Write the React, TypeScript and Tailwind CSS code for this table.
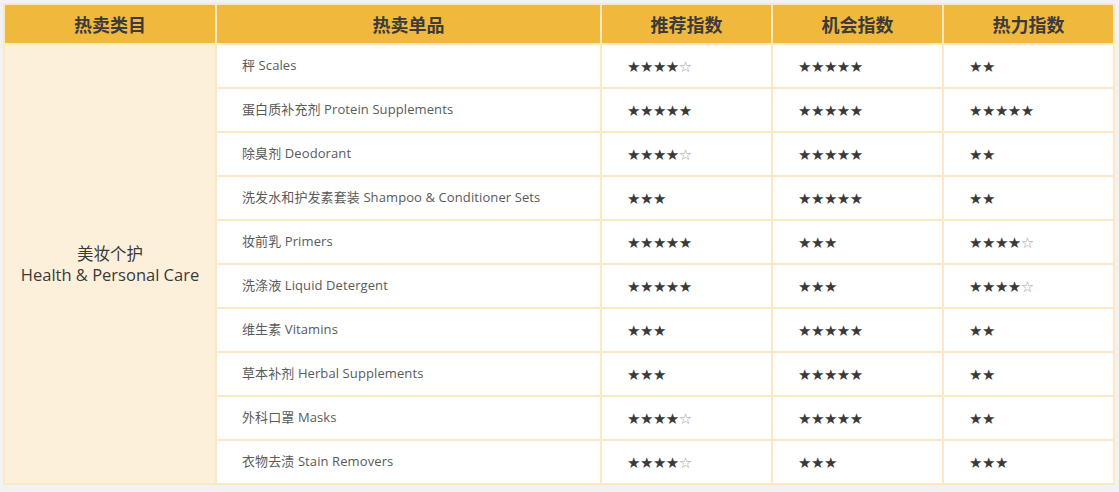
import React from "react";

type Row = { name: string; rec: number; opp: number; heat: number };

const rows: Row[] = [
  { name: "秤 Scales", rec: 4, opp: 5, heat: 2 },
  { name: "蛋白质补充剂 Protein Supplements", rec: 5, opp: 5, heat: 5 },
  { name: "除臭剂 Deodorant", rec: 4, opp: 5, heat: 2 },
  { name: "洗发水和护发素套装 Shampoo & Conditioner Sets", rec: 3, opp: 5, heat: 2 },
  { name: "妆前乳 Primers", rec: 5, opp: 3, heat: 4 },
  { name: "洗涤液 Liquid Detergent", rec: 5, opp: 3, heat: 4 },
  { name: "维生素 Vitamins", rec: 3, opp: 5, heat: 2 },
  { name: "草本补剂 Herbal Supplements", rec: 3, opp: 5, heat: 2 },
  { name: "外科口罩 Masks", rec: 4, opp: 5, heat: 2 },
  { name: "衣物去渍 Stain Removers", rec: 4, opp: 3, heat: 3 },
];

// 4 means four full stars plus one hollow one; 2, 3 and 5 are shown bare
const Stars: React.FC<{ n: number }> = ({ n }) => (
  <span className="text-[15px] tracking-[-0.5px] text-[#3a3a3a]" style={{ fontFamily: '"DejaVu Sans", sans-serif' }}>
    {"★".repeat(n)}
    {n === 4 && <span className="text-[#9a9a9a]">☆</span>}
  </span>
);

const th = "border-2 border-[#fce8c2] h-[40px] pt-[2px] text-center text-[18px] font-bold text-[#3b3b3b]";
const td = "border-2 border-[#fce8c2] h-[44px] pl-[25px] bg-white";

export default function App() {
  return (
    <div
      className="min-h-screen bg-[#f2f2f2] p-[3px]"
      style={{ fontFamily: '"Open Sans", "Noto Sans CJK SC", sans-serif' }}
    >
      <table className="w-[1111px] border-collapse table-fixed">
        <colgroup>
          <col className="w-[212px]" />
          <col className="w-[385px]" />
          <col className="w-[171px]" />
          <col className="w-[171px]" />
          <col className="w-[171px]" />
        </colgroup>
        <thead>
          <tr className="bg-[#f0b93d]">
            <th className={th}>热卖类目</th>
            <th className={th}>热卖单品</th>
            <th className={th}>推荐指数</th>
            <th className={th}>机会指数</th>
            <th className={th}>热力指数</th>
          </tr>
        </thead>
        <tbody>
          {rows.map((r, i) => (
            <tr key={r.name}>
              {i === 0 && (
                <td
                  rowSpan={rows.length}
                  className="border-2 border-[#fce8c2] bg-[#fcf0da] text-center text-[16.5px] leading-[21px] text-[#3a3a3a]"
                >
                  <div>美妆个护</div>
                  <div>Health &amp; Personal Care</div>
                </td>
              )}
              <td className={td + " text-[13px] tracking-[0.1px] text-[#5a5a5a]"}>{r.name}</td>
              <td className={td}>
                <Stars n={r.rec} />
              </td>
              <td className={td}>
                <Stars n={r.opp} />
              </td>
              <td className={td}>
                <Stars n={r.heat} />
              </td>
            </tr>
          ))}
        </tbody>
      </table>
    </div>
  );
}
